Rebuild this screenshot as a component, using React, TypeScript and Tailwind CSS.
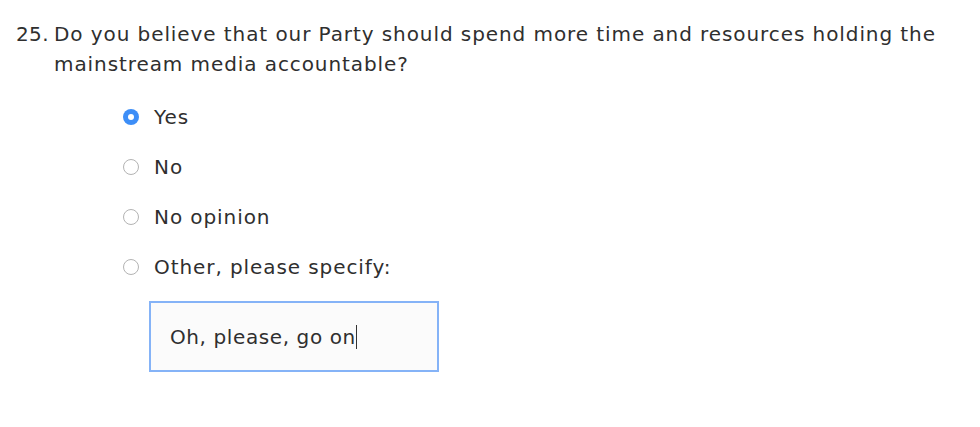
const options = ["Yes", "No", "No opinion", "Other, please specify:"];

function Radio({ checked }: { checked: boolean }) {
  if (checked) {
    return (
      <span className="w-4 h-4 rounded-full bg-[#3d8ef7] flex items-center justify-center shrink-0">
        <span className="w-[6px] h-[6px] rounded-full bg-white" />
      </span>
    );
  }
  return <span className="w-4 h-4 rounded-full border border-[#b3b3b3] bg-white shrink-0" />;
}

export default function App() {
  return (
    <div className="w-[980px] h-[427px] bg-white text-[#2f2f2f] pl-4 pt-[19px] font-['DejaVu_Sans',sans-serif] tracking-[0.92px]">
      <div className="flex text-[20px] leading-[30px]">
        <span className="w-[38px] shrink-0 tracking-[0.4px]">25.</span>
        <p className="w-[900px]">
          Do you believe that our Party should spend more time and resources holding the mainstream media accountable?
        </p>
      </div>

      <div className="mt-[13px] pl-[107px]">
        {options.map((opt, i) => (
          <label key={opt} className="h-[50px] flex items-center gap-[15px] text-[20px]">
            <Radio checked={i === 0} />
            <span>{opt}</span>
          </label>
        ))}

        <div className="mt-[9px] ml-[26px] w-[290px] h-[71px] border-2 border-[#85b3f7] bg-[#fbfbfb] flex items-center pl-[19px] text-[20px] tracking-[0.6px]">
          <span>Oh, please, go on</span>
          <span className="w-px h-[24px] bg-[#333333]" />
        </div>
      </div>
    </div>
  );
}
